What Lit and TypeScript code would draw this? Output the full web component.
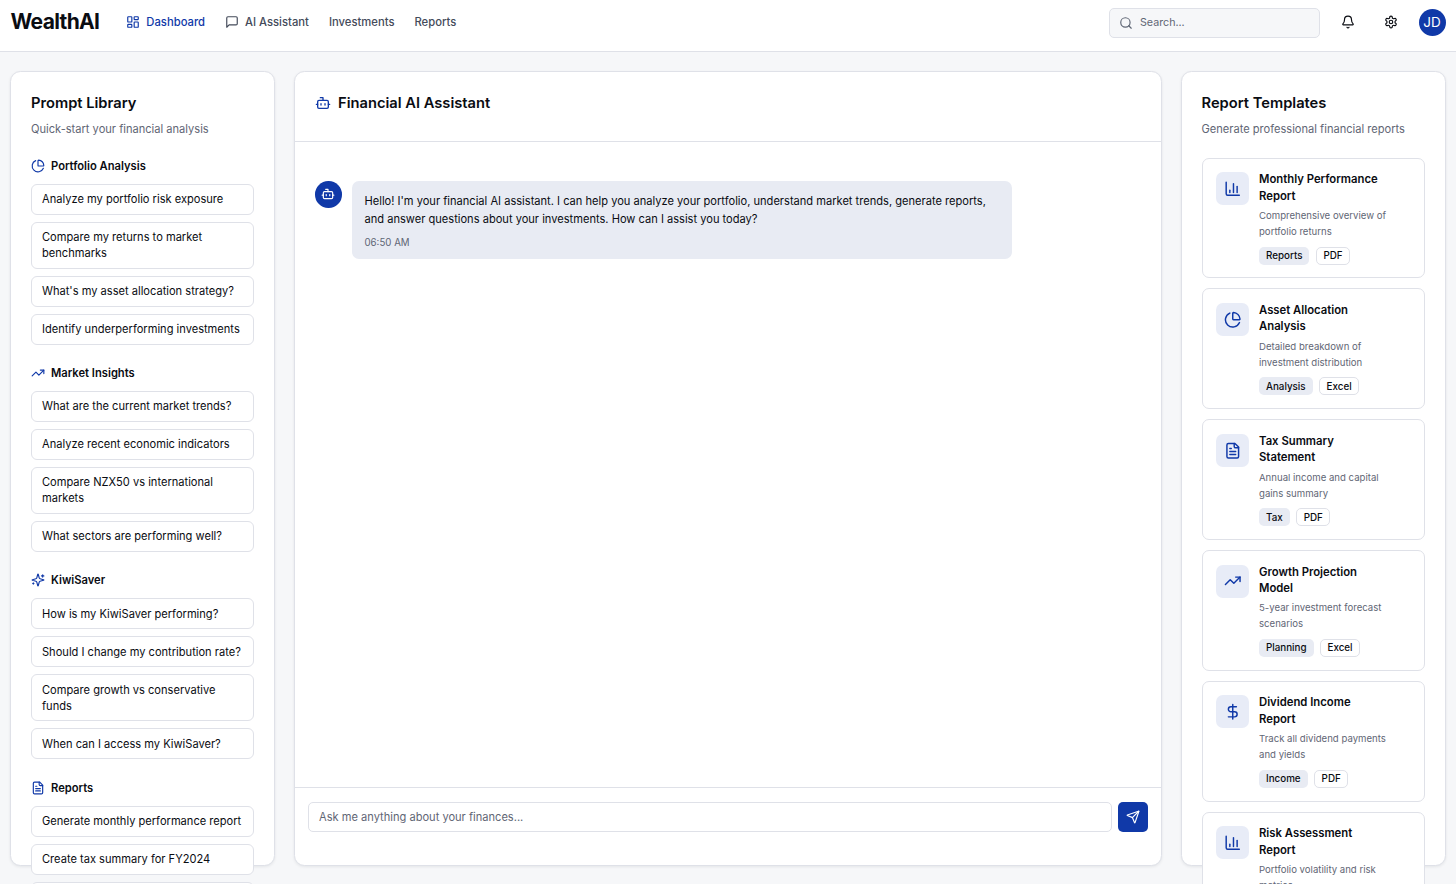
import { LitElement, html, css, svg } from "lit";
import { customElement } from "lit/decorators.js";

const icons: Record<string, any> = {
  dash: svg`<rect width="7" height="9" x="3" y="3" rx="1"/><rect width="7" height="5" x="14" y="3" rx="1"/><rect width="7" height="9" x="14" y="12" rx="1"/><rect width="7" height="5" x="3" y="16" rx="1"/>`,
  msg: svg`<path d="M21 15a2 2 0 0 1-2 2H7l-4 4V5a2 2 0 0 1 2-2h14a2 2 0 0 1 2 2z"/>`,
  search: svg`<circle cx="11" cy="11" r="8"/><path d="m21 21-4.3-4.3"/>`,
  bell: svg`<path d="M10.268 21a2 2 0 0 0 3.464 0"/><path d="M3.262 15.326A1 1 0 0 0 4 17h16a1 1 0 0 0 .74-1.673C19.41 13.956 18 12.499 18 8A6 6 0 0 0 6 8c0 4.499-1.411 5.956-2.738 7.326"/>`,
  gear: svg`<path d="M12.22 2h-.44a2 2 0 0 0-2 2v.18a2 2 0 0 1-1 1.73l-.43.25a2 2 0 0 1-2 0l-.15-.08a2 2 0 0 0-2.73.73l-.22.38a2 2 0 0 0 .73 2.73l.15.1a2 2 0 0 1 1 1.72v.51a2 2 0 0 1-1 1.74l-.15.09a2 2 0 0 0-.73 2.73l.22.38a2 2 0 0 0 2.73.73l.15-.08a2 2 0 0 1 2 0l.43.25a2 2 0 0 1 1 1.73V20a2 2 0 0 0 2 2h.44a2 2 0 0 0 2-2v-.18a2 2 0 0 1 1-1.73l.43-.25a2 2 0 0 1 2 0l.15.08a2 2 0 0 0 2.73-.73l.22-.39a2 2 0 0 0-.73-2.73l-.15-.08a2 2 0 0 1-1-1.74v-.5a2 2 0 0 1 1-1.74l.15-.09a2 2 0 0 0 .73-2.73l-.22-.38a2 2 0 0 0-2.73-.73l-.15.08a2 2 0 0 1-2 0l-.43-.25a2 2 0 0 1-1-1.73V4a2 2 0 0 0-2-2z"/><circle cx="12" cy="12" r="3"/>`,
  bot: svg`<path d="M12 8V4H8"/><rect width="16" height="12" x="4" y="8" rx="2"/><path d="M2 14h2"/><path d="M20 14h2"/><path d="M15 13v2"/><path d="M9 13v2"/>`,
  pie: svg`<path d="M21 12c.552 0 1.005-.449.95-.998a10 10 0 0 0-8.953-8.951c-.55-.055-.998.398-.998.95v8a1 1 0 0 0 1 1z"/><path d="M21.21 15.89A10 10 0 1 1 8 2.83"/>`,
  trend: svg`<polyline points="22 7 13.5 15.5 8.5 10.5 2 17"/><polyline points="16 7 22 7 22 13"/>`,
  spark: svg`<path d="M9.937 15.5A2 2 0 0 0 8.5 14.063l-6.135-1.582a.5.5 0 0 1 0-.962L8.5 9.936A2 2 0 0 0 9.937 8.5l1.582-6.135a.5.5 0 0 1 .963 0L14.063 8.5A2 2 0 0 0 15.5 9.937l6.135 1.581a.5.5 0 0 1 0 .964L15.5 14.063a2 2 0 0 0-1.437 1.437l-1.582 6.135a.5.5 0 0 1-.963 0z"/><path d="M20 3v4"/><path d="M22 5h-4"/><path d="M4 17v2"/><path d="M5 18H3"/>`,
  file: svg`<path d="M15 2H6a2 2 0 0 0-2 2v16a2 2 0 0 0 2 2h12a2 2 0 0 0 2-2V7Z"/><path d="M14 2v4a2 2 0 0 0 2 2h4"/><path d="M10 9H8"/><path d="M16 13H8"/><path d="M16 17H8"/>`,
  chart: svg`<path d="M3 3v16a2 2 0 0 0 2 2h16"/><path d="M18 17V9"/><path d="M13 17V5"/><path d="M8 17v-3"/>`,
  dollar: svg`<line x1="12" x2="12" y1="2" y2="22"/><path d="M17 5H9.5a3.5 3.5 0 0 0 0 7h5a3.5 3.5 0 0 1 0 7H6"/>`,
  send: svg`<path d="M14.536 21.686a.5.5 0 0 0 .937-.024l6.5-19a.496.496 0 0 0-.635-.635l-19 6.5a.5.5 0 0 0-.024.937l7.93 3.18a2 2 0 0 1 1.112 1.11z"/><path d="m21.854 2.147-10.94 10.939"/>`,
};

const icon = (name: string, size = 14) => html`<svg class="ic" width=${size} height=${size} viewBox="0 0 24 24" fill="none" stroke="currentColor" stroke-width="2" stroke-linecap="round" stroke-linejoin="round">${icons[name]}</svg>`;

const prompts = [
  { icon: "pie", title: "Portfolio Analysis", items: ["Analyze my portfolio risk exposure", "Compare my returns to market benchmarks", "What's my asset allocation strategy?", "Identify underperforming investments"] },
  { icon: "trend", title: "Market Insights", items: ["What are the current market trends?", "Analyze recent economic indicators", "Compare NZX50 vs international markets", "What sectors are performing well?"] },
  { icon: "spark", title: "KiwiSaver", items: ["How is my KiwiSaver performing?", "Should I change my contribution rate?", "Compare growth vs conservative funds", "When can I access my KiwiSaver?"] },
  { icon: "file", title: "Reports", items: ["Generate monthly performance report", "Create tax summary for FY2024", "Export portfolio holdings"] },
];

const templates = [
  { icon: "chart", title: "Monthly Performance Report", desc: "Comprehensive overview of portfolio returns", tag: "Reports", fmt: "PDF" },
  { icon: "pie", title: "Asset Allocation Analysis", desc: "Detailed breakdown of investment distribution", tag: "Analysis", fmt: "Excel" },
  { icon: "file", title: "Tax Summary Statement", desc: "Annual income and capital gains summary", tag: "Tax", fmt: "PDF" },
  { icon: "trend", title: "Growth Projection Model", desc: "5-year investment forecast scenarios", tag: "Planning", fmt: "Excel" },
  { icon: "dollar", title: "Dividend Income Report", desc: "Track all dividend payments and yields", tag: "Income", fmt: "PDF" },
  { icon: "chart", title: "Risk Assessment Report", desc: "Portfolio volatility and risk metrics", tag: "Analysis", fmt: "PDF" },
];

@customElement("app-root")
export class AppRoot extends LitElement {
  static styles = css`
    :host {
      display: flex; flex-direction: column; height: 100vh; overflow: hidden;
      background: #f6f7f9; color: #0a0c12;
      font-family: Inter, "Liberation Sans", sans-serif; font-size: 11.1px;
      --primary: #1039a8; --line: #dfe1e8; --muted: #5f6675; --soft: #e8ebf3;
    }
    * { box-sizing: border-box; }
    .ic { display: block; flex: none; }
    header {
      height: 52px; flex: none; background: #fff; border-bottom: 1px solid var(--line);
      display: flex; align-items: center; padding: 0 10.5px 7px 10.5px;
    }
    .logo { font-size: 21px; font-weight: 700; letter-spacing: -0.65px; margin-right: 27px; line-height: 28px; }
    nav { display: flex; align-items: center; gap: 20px; font-size: 11.25px; }
    nav a { display: flex; align-items: center; gap: 6px; color: #444b5a; font-weight: 500; line-height: 16px; }
    nav a.on { color: var(--primary); }
    .right { margin-left: auto; display: flex; align-items: center; gap: 14px; }
    .search {
      width: 211px; height: 30px; background: #f6f7f9; border: 1px solid var(--line); border-radius: 5px;
      display: flex; align-items: center; gap: 7px; padding-left: 9.5px; color: #5f6675; margin-top: 1px; font-size: 10.7px;
    }
    .iconbtn { width: 28px; height: 28px; display: flex; align-items: center; justify-content: center; color: #0a0c12; }
    .iconbtn.bell { margin-right: 1px; }
    .avatar {
      width: 27px; height: 27px; border-radius: 50%; background: var(--primary); color: #fff;
      display: flex; align-items: center; justify-content: center; font-size: 13.5px; font-weight: 400;
    }
    main { flex: 1; min-height: 0; display: grid; grid-template-columns: 265px 1fr 265px; gap: 19px; padding: 19px 10.5px 18.5px 10px; }
    .panel {
      background: #fff; border: 1px solid var(--line); border-radius: 10.5px;
      box-shadow: 0 1px 3px rgba(16, 24, 40, 0.08); min-height: 0;
    }
    .side { padding: 20.2px 20px 20px; }
    .side h2 { margin: 0; font-size: 14.7px; font-weight: 600; line-height: 22px; }
    .sub { margin: 6px 0 19.5px; color: var(--muted); line-height: 18px; white-space: nowrap; }
    .sec { margin-bottom: 20.3px; }
    .sec h3 { margin: 0 0 10px; display: flex; align-items: center; gap: 6px; font-size: 11.2px; font-weight: 600; line-height: 16px; }
    .sec h3 .ic { color: var(--primary); }
    .pl { display: flex; flex-direction: column; gap: 7px; }
    .p { background: #fff; border: 1px solid var(--line); border-radius: 6px; padding: 6.5px 10px; line-height: 16px; }
    .center { display: flex; flex-direction: column; }
    .ch { height: 70px; flex: none; border-bottom: 1px solid var(--line); display: flex; align-items: flex-start; padding: 20.2px 20px; gap: 7px; }
    .ch .ic { color: var(--primary); margin-top: 3px; }
    .ch h2 { margin: 0; font-size: 14.7px; font-weight: 600; line-height: 22px; }
    .msgs { flex: 1; padding: 39px 20px 20px; display: flex; gap: 10.5px; align-items: flex-start; }
    .bot { width: 26.5px; height: 26.5px; border-radius: 50%; background: var(--primary); color: #fff; display: flex; align-items: center; justify-content: center; flex: none; }
    .bubble { width: 660px; background: var(--soft); border-radius: 7px; padding: 10.5px 12.5px 7.5px; line-height: 18.4px; }
    .time { margin-top: 7px; font-size: 9.7px; color: var(--muted); line-height: 16px; }
    .cf { flex: none; height: 78px; border-top: 1px solid var(--line); padding: 14px 13px; display: flex; gap: 6px; }
    .input { flex: 1; height: 30px; border: 1px solid var(--line); border-radius: 5px; display: flex; align-items: center; padding: 0 10px; color: var(--muted); }
    .sendb { width: 30px; height: 30px; border-radius: 5px; background: var(--primary); color: #fff; display: flex; align-items: center; justify-content: center; flex: none; }
    .tl { display: flex; flex-direction: column; gap: 10px; }
    .card { border: 1px solid var(--line); border-radius: 7px; background: #fff; padding: 13.5px; display: flex; gap: 10px; height: 120.8px; flex: none; }
    .tic { width: 33px; height: 33px; border-radius: 7px; background: #e8ecf7; color: var(--primary); display: flex; align-items: center; justify-content: center; flex: none; }
    .tb { width: 130px; }
    .tb h4 { margin: -1px 0 0; font-size: 11.3px; font-weight: 600; line-height: 16.4px; }
    .tb p { margin: 4px 0 0; font-size: 9.6px; color: var(--muted); line-height: 16px; }
    .tags { display: flex; gap: 6.5px; margin-top: 6.5px; }
    .tag { height: 18px; padding: 0 7px; border-radius: 5px; background: var(--soft); font-size: 9.8px; font-weight: 500; display: flex; align-items: center; }
    .tag.o { background: #fff; border: 1px solid var(--line); padding: 0 6.5px; }
  `;

  render() {
    return html`
      <header>
        <div class="logo">WealthAI</div>
        <nav>
          <a class="on">${icon("dash")}Dashboard</a>
          <a>${icon("msg")}AI Assistant</a>
          <a>Investments</a>
          <a>Reports</a>
        </nav>
        <div class="right">
          <div class="search">${icon("search")}<span>Search...</span></div>
          <div class="iconbtn bell">${icon("bell")}</div>
          <div class="iconbtn">${icon("gear")}</div>
          <div class="avatar">JD</div>
        </div>
      </header>
      <main>
        <section class="panel side">
          <h2>Prompt Library</h2>
          <div class="sub">Quick-start your financial analysis</div>
          ${prompts.map((s) => html`
            <div class="sec">
              <h3>${icon(s.icon)}${s.title}</h3>
              <div class="pl">${s.items.map((i) => html`<div class="p">${i}</div>`)}</div>
            </div>`)}
        </section>
        <section class="panel center">
          <div class="ch">${icon("bot", 16)}<h2>Financial AI Assistant</h2></div>
          <div class="msgs">
            <div class="bot">${icon("bot")}</div>
            <div class="bubble">
              Hello! I'm your financial AI assistant. I can help you analyze your portfolio, understand market trends, generate reports, and answer questions about your investments. How can I assist you today?
              <div class="time">06:50 AM</div>
            </div>
          </div>
          <div class="cf">
            <div class="input">Ask me anything about your finances...</div>
            <div class="sendb">${icon("send")}</div>
          </div>
        </section>
        <section class="panel side">
          <h2>Report Templates</h2>
          <div class="sub">Generate professional financial reports</div>
          <div class="tl">
            ${templates.map((t) => html`
              <div class="card">
                <div class="tic">${icon(t.icon, 17.5)}</div>
                <div class="tb">
                  <h4>${t.title}</h4>
                  <p>${t.desc}</p>
                  <div class="tags"><span class="tag">${t.tag}</span><span class="tag o">${t.fmt}</span></div>
                </div>
              </div>`)}
          </div>
        </section>
      </main>
    `;
  }
}
